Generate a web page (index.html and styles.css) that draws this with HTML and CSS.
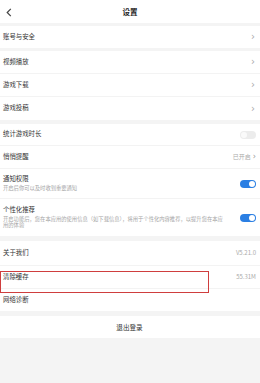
FILE: index.html
```html
<!DOCTYPE html>
<html lang="zh">
<head>
<meta charset="utf-8">
<link rel="stylesheet" href="styles.css">
</head>
<body>
<div class="page">
  <header class="header">
    <svg class="back" width="6" height="9" viewBox="0 0 6 9"><path d="M4.8 0.8 L1.2 4.5 L4.8 8.2" fill="none" stroke="#444" stroke-width="1.2"/></svg>
    <div class="title">设置</div>
  </header>

  <section class="group g1">
    <div class="row h22"><span class="label">账号与安全</span><span class="chev">›</span></div>
  </section>

  <section class="group g2">
    <div class="row h23 line"><span class="label">视频播放</span><span class="chev">›</span></div>
    <div class="row h23 line"><span class="label">游戏下载</span><span class="chev">›</span></div>
    <div class="row h23"><span class="label">游戏投稿</span><span class="chev">›</span></div>
  </section>

  <section class="group g3">
    <div class="row h22 line"><span class="label">统计游戏时长</span><span class="toggle off"></span></div>
    <div class="row h23 line"><span class="label">悄悄提醒</span><span class="value">已开启 <span class="chev2">›</span></span></div>
    <div class="row multi r30 line">
      <div class="texts"><div class="label">通知权限</div><div class="sub">开启后你可以及时收到重要通知</div></div>
      <span class="toggle on"></span>
    </div>
    <div class="row multi r37">
      <div class="texts wide"><div class="label">个性化推荐</div><div class="sub">开启功能后，您在本应用的使用信息（如下载信息），将用于个性化内容推荐，以提升您在本应用的体验</div></div>
      <span class="toggle on"></span>
    </div>
  </section>

  <section class="group g4">
    <div class="row h25 line"><span class="label">关于我们</span><span class="value">V5.21.0</span></div>
    <div class="row h23 line boxed"><span class="label">清除缓存</span><span class="value">55.31M</span><span class="mark"></span></div>
    <div class="row h22"><span class="label">网络诊断</span></div>
  </section>

  <section class="group g5">
    <div class="row h22 center"><span class="label">退出登录</span></div>
  </section>
</div>
</body>
</html>
```

FILE: styles.css
```css
* { box-sizing: border-box; margin: 0; padding: 0; }
html, body { width: 260px; height: 383px; }
body {
  background: #f4f4f4;
  font-family: "Noto Sans CJK SC", "Noto Sans", sans-serif;
  color: #333;
  overflow: hidden;
}
.page { display: flex; flex-direction: column; }
.header {
  height: 23px;
  background: #fff;
  position: relative;
  display: flex;
  align-items: center;
  justify-content: center;
}
.back { position: absolute; left: 6px; top: 8px; }
.title { font-size: 7.5px; font-weight: 700; color: #222; line-height: 1; }
.group { background: #fff; }
.g1 { margin-top: 3px; }
.g2 { margin-top: 3px; }
.g3 { margin-top: 4px; }
.g4 { margin-top: 5px; }
.g5 { margin-top: 5px; }
.row {
  display: flex;
  align-items: center;
  justify-content: space-between;
  padding: 0 4px 0 3px;
  position: relative;
}
.line { border-bottom: 1px solid #f3f3f3; }
.h22 { height: 22px; }
.h23 { height: 23px; }
.h25 { height: 25px; }
.r30 { height: 30px; }
.r37 { height: 37px; }
.label { font-size: 6.4px; line-height: 1; color: #333; }
.chev { font-size: 10px; color: #aaa; line-height: 1; font-family: "DejaVu Sans", sans-serif; margin-right: 1px; }
.chev2 { font-size: 8px; color: #999; font-family: "DejaVu Sans", sans-serif; }
.value { font-size: 6px; color: #aaa; line-height: 1; font-family: "Noto Sans CJK SC", "Noto Sans", sans-serif; display: flex; align-items: center; gap: 2px; }
.multi { align-items: center; }
.texts { display: flex; flex-direction: column; gap: 3px; }
.texts.wide { width: 221px; gap: 2px; }
.sub { font-size: 5.3px; line-height: 6px; color: #a5a5a5; }
.toggle {
  width: 16px; height: 8px; border-radius: 4px; position: relative; flex: none;
}
.toggle::after {
  content: ""; position: absolute; top: 1px; width: 6px; height: 6px; border-radius: 50%; background: #fff;
}
.toggle.on { background: #2b7fe3; }
.toggle.on::after { right: 1px; }
.toggle.off { background: #ececec; }
.toggle.off::after { left: 1px; background: #fafafa; }
.center { justify-content: center; }
.center .label { font-size: 6.6px; }
.mark {
  position: absolute;
  left: 0; top: 5px;
  width: 209px; height: 22px;
  border: 1.5px solid #cf3e3e;
}
```
